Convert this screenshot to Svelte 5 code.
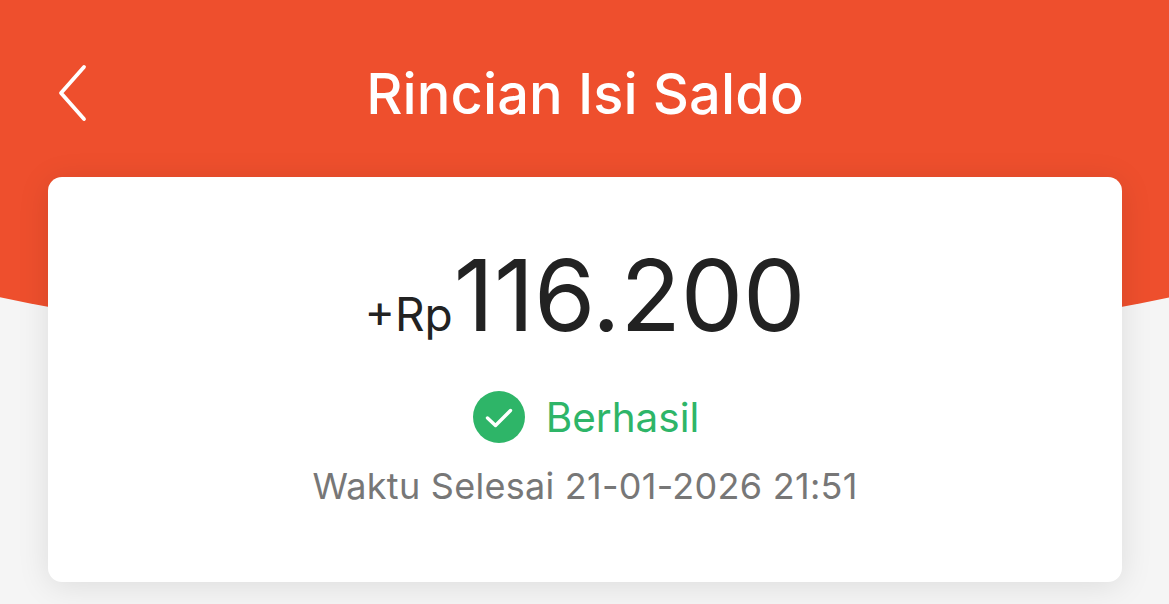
<script>
  const amount = '116.200';
  const finishedAt = '21-01-2026 21:51';
</script>

<div class="page">
  <div class="backdrop"></div>
  <header class="topbar">
    <button class="back" type="button" aria-label="Kembali">
      <svg width="30" height="58" viewBox="0 0 30 58" fill="none">
        <path d="M26 3 L3 29 L26 55" stroke="#fff" stroke-width="3.8" stroke-linecap="round" stroke-linejoin="round" />
      </svg>
    </button>
    <h1>Rincian Isi Saldo</h1>
  </header>

  <section class="card">
    <div class="amount">
      <span class="prefix">+Rp</span><span class="value">{amount}</span>
    </div>
    <div class="status">
      <svg width="52" height="52" viewBox="0 0 52 52">
        <circle cx="26" cy="26" r="26" fill="#2eb568" />
        <path d="M14.5 27 L22.5 34.5 L37.5 19.5" fill="none" stroke="#fff" stroke-width="3.4" stroke-linecap="round" stroke-linejoin="round" />
      </svg>
      <span>Berhasil</span>
    </div>
    <div class="time">Waktu Selesai {finishedAt}</div>
  </section>
</div>

<style>
  :global(body) {
    margin: 0;
    background: #f5f5f5;
    font-family: Inter, "Liberation Sans", sans-serif;
  }

  .page {
    position: relative;
    width: 1169px;
    height: 604px;
    overflow: hidden;
    background: #f5f5f5;
  }

  /* big circle, only its lower arc shows on either side of the card */
  .backdrop {
    position: absolute;
    left: -2265px;
    bottom: 246px;
    width: 5700px;
    height: 5700px;
    border-radius: 50%;
    background: #ee4f2d;
  }

  .topbar {
    position: relative;
    height: 177px;
    display: flex;
    align-items: flex-start;
    justify-content: center;
  }

  .back {
    position: absolute;
    left: 58px;
    top: 64px;
    padding: 0;
    border: 0;
    background: none;
    line-height: 0;
  }

  h1 {
    margin: 60px 0 0 1px;
    font-size: 56px;
    line-height: 68px;
    font-weight: 500;
    letter-spacing: 0.1px;
    color: #fff;
  }

  .card {
    position: relative;
    margin: 0 47px 0 48px;
    height: 405px;
    box-sizing: border-box;
    padding-top: 68px;
    background: #fff;
    border-radius: 14px;
    box-shadow: 0 4px 32px rgba(0, 0, 0, 0.1);
    display: flex;
    flex-direction: column;
    align-items: center;
  }

  .amount {
    display: flex;
    align-items: baseline;
    color: #222;
    line-height: 100px;
  }

  .prefix {
    font-size: 46px;
  }

  .value {
    margin-left: 1px;
    font-size: 99px;
    font-weight: 420;
    letter-spacing: -0.1px;
  }

  .status {
    margin-top: 27px;
    margin-left: 2px;
    display: flex;
    align-items: center;
    gap: 21px;
    font-size: 40.5px;
    color: #2eb568;
  }

  .time {
    margin-top: 21px;
    font-size: 36px;
    letter-spacing: 0.27px;
    color: #777;
  }
</style>
